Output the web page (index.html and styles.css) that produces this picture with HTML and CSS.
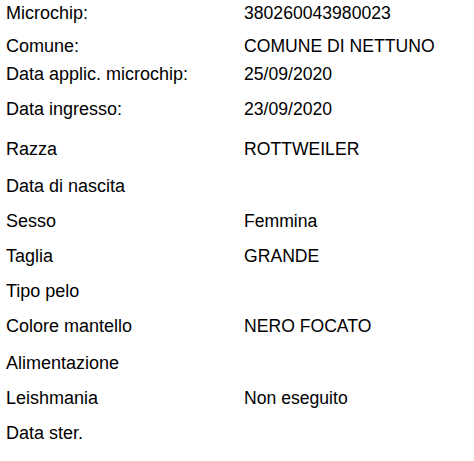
FILE: index.html
```html
<!DOCTYPE html>
<html lang="it">
<head>
    <meta charset="UTF-8">
    <meta name="viewport" content="width=device-width, initial-scale=1.0">
    <title>Scheda cane</title>
    <link rel="stylesheet" href="styles.css">
</head>
<body>
    <div class="sheet">
        <div class="row tight"><span class="label">Microchip:</span><span class="value">380260043980023</span></div>
        <div class="row short"><span class="label">Comune:</span><span class="value">COMUNE DI NETTUNO</span></div>
        <div class="row"><span class="label">Data applic. microchip:</span><span class="value">25/09/2020</span></div>
        <div class="row tall"><span class="label">Data ingresso:</span><span class="value">23/09/2020</span></div>
        <div class="row loose"><span class="label">Razza</span><span class="value">ROTTWEILER</span></div>
        <div class="row"><span class="label">Data di nascita</span><span class="value"></span></div>
        <div class="row"><span class="label">Sesso</span><span class="value">Femmina</span></div>
        <div class="row"><span class="label">Taglia</span><span class="value">GRANDE</span></div>
        <div class="row"><span class="label">Tipo pelo</span><span class="value"></span></div>
        <div class="row loose"><span class="label">Colore mantello</span><span class="value">NERO FOCATO</span></div>
        <div class="row"><span class="label">Alimentazione</span><span class="value"></span></div>
        <div class="row"><span class="label">Leishmania</span><span class="value">Non eseguito</span></div>
        <div class="row"><span class="label">Data ster.</span><span class="value"></span></div>
    </div>
</body>
</html>
```

FILE: styles.css
```css
body {
    margin: 0;
    background-color: #fff;
    color: #000;
    font-family: 'Liberation Sans', Arial, sans-serif;
    font-size: 18px;
}

.sheet {
    padding: 3px 0 0 6px;
}

.row {
    display: flex;
    height: 35px;
    line-height: 20px;
}

/* rows in the original form are not evenly spaced */
.row.tight {
    height: 33px;
}

.row.short {
    height: 28px;
}

.row.tall {
    height: 40px;
}

.row.loose {
    height: 37px;
}

.label {
    width: 238px;
    flex-shrink: 0;
}

.value {
    flex: 1;
    font-size: 17.6px;
}
```
